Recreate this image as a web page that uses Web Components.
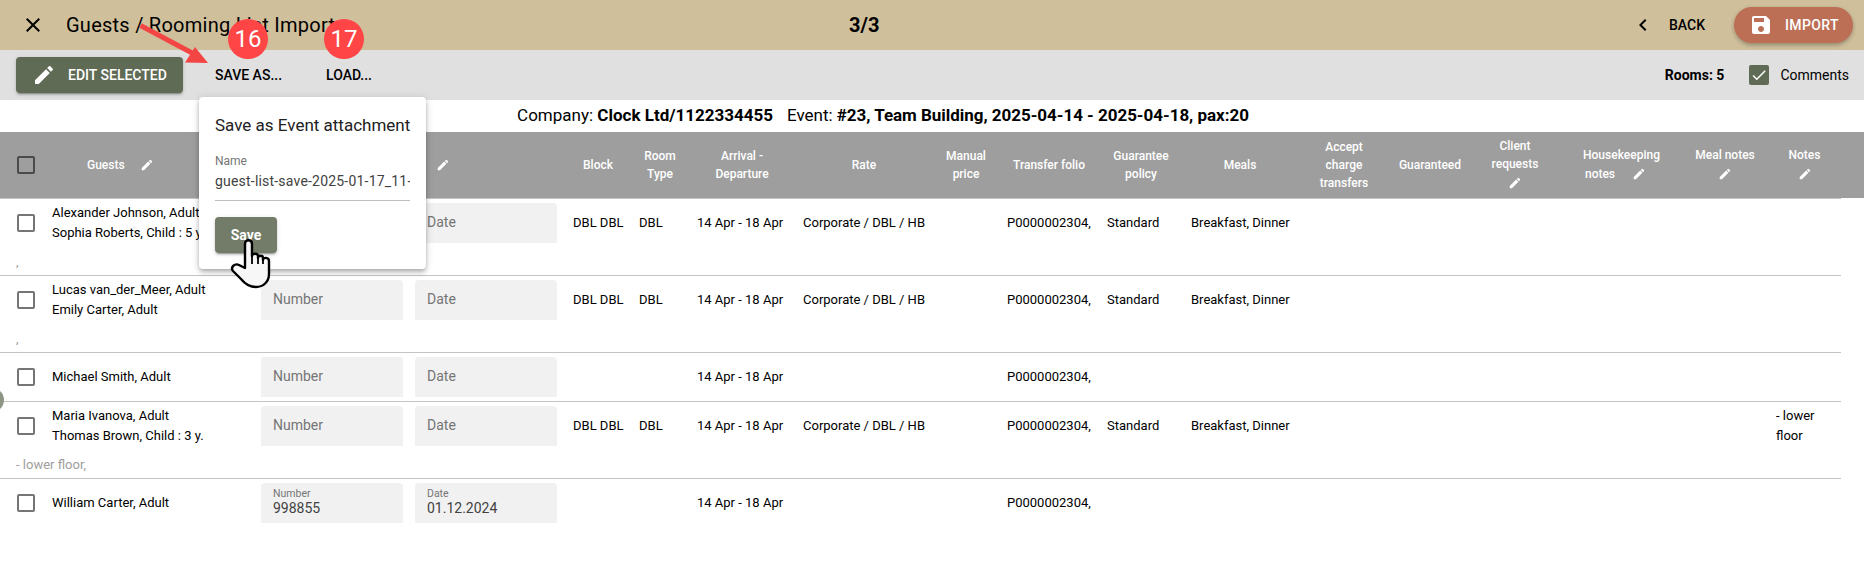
<!DOCTYPE html>
<html lang="en">
<head>
<meta charset="utf-8">
<title>Guests / Rooming List Import</title>
<style>
html,body{margin:0;padding:0;background:#fff;overflow:hidden}
body{font-family:Roboto,"Liberation Sans",sans-serif;color:#000}
</style>
</head>
<body>
<gl-app></gl-app>
<script>
const P={
 close:'M19 6.41L17.59 5 12 10.59 6.41 5 5 6.41 10.59 12 5 17.59 6.41 19 12 13.41 17.59 19 19 17.59 13.41 12z',
 edit:'M3 17.25V21h3.75L17.81 9.94l-3.75-3.75L3 17.25zM20.71 7.04a1 1 0 0 0 0-1.41l-2.34-2.34a1 1 0 0 0-1.41 0l-1.83 1.83 3.75 3.75 1.83-1.83z',
 save:'M17 3H5c-1.11 0-2 .9-2 2v14c0 1.1.89 2 2 2h14c1.1 0 2-.9 2-2V7l-4-4zm-5 16c-1.66 0-3-1.34-3-3s1.34-3 3-3 3 1.34 3 3-1.34 3-3 3zm3-10H5V5h10v4z',
 back:'M15.41 7.41L14 6l-6 6 6 6 1.41-1.41L10.83 12z',
 check:'M9 16.17L4.83 12l-1.42 1.41L9 19 21 7l-1.41-1.41z'
};
const icon=(n,s,c='currentColor')=>`<svg width="${s}" height="${s}" viewBox="0 0 24 24" fill="${c}" style="display:block;flex:none" aria-hidden="true"><path d="${P[n]}"/></svg>`;
const COLS='44px 209px 156px 156px 66px 58px 106px 138px 66px 100px 84px 114px 94px 78px 92px 121px 86px 73px';

class Base extends HTMLElement{
  render(html){ if(!this.shadowRoot) this.attachShadow({mode:'open'}); this.shadowRoot.innerHTML=html; }
}
class GlBadge extends Base{connectedCallback(){this.render(`<style>
:host{position:absolute;display:flex;width:40px;height:40px;align-items:center;justify-content:center;border-radius:50%;background:#ff4545;color:#fff;font:400 24px/1 Roboto,sans-serif}
</style><slot></slot>`)}}
class GlCheck extends Base{connectedCallback(){const on=this.hasAttribute('checked');this.render(`<style>
:host{display:block;flex:none;box-sizing:border-box;width:18px;height:18px;border:2px solid var(--check-border,#757575);border-radius:2px}
:host([checked]){width:20px;height:20px;border:0;background:#606b55;display:flex;align-items:center;justify-content:center;border-radius:2px}
</style>${on?icon('check',18,'#fff'):''}`)}}
class GlTopbar extends Base{connectedCallback(){this.render(`<style>
:host{display:grid;grid-template-columns:828px 1fr auto;align-items:center;height:50px;background:#cfbf9b;padding:0 11px 0 21px;box-sizing:border-box}
.l{display:flex;align-items:center;gap:21px;color:#000}
h1{margin:0;font:400 20px/1 Roboto,sans-serif;letter-spacing:.25px;white-space:nowrap}
.step{font:700 20px/1 Roboto,sans-serif}
.r{display:flex;align-items:center}
.back{display:flex;align-items:center;font:500 14px/1 Roboto,sans-serif;margin-right:29px;gap:14px}
.imp{display:flex;align-items:center;height:36px;width:119px;box-sizing:border-box;padding-left:15px;gap:12px;background:#bd6f56;color:#fff;border-radius:18px;font:500 14px/1 Roboto,sans-serif;letter-spacing:.35px;box-shadow:0 3px 5px -1px rgba(0,0,0,.2),0 1px 4px rgba(0,0,0,.14)}
</style>
<div class="l">${icon('close',24,'#000')}<h1>Guests / Rooming List Import</h1></div>
<div class="step">3/3</div>
<div class="r"><div class="back">${icon('back',24,'#000')}<span>BACK</span></div>
<div class="imp">${icon('save',24,'#fff')}<span>IMPORT</span></div></div>`)}}
class GlToolbar extends Base{connectedCallback(){this.render(`<style>
:host{display:flex;align-items:center;height:50px;background:#e0e0e0;padding:0 15px 0 16px;box-sizing:border-box}
.b{display:flex;align-items:center;font:500 14px/1 Roboto,sans-serif;white-space:nowrap}
.edit{background:#606b55;color:#fff;height:36px;width:167px;box-sizing:border-box;padding-left:16px;gap:12px;border-radius:4px;box-shadow:0 3px 1px -2px rgba(0,0,0,.2),0 2px 2px rgba(0,0,0,.14),0 1px 5px rgba(0,0,0,.12)}
.save{margin-left:32px}
.load{margin-left:44px}
.rooms{margin-left:auto;font:700 14px/1 Roboto,sans-serif;margin-right:25px}
.c{font:400 14px/1 Roboto,sans-serif;margin-left:11px}
</style>
<div class="b edit">${icon('edit',24,'#fff')}<span>EDIT SELECTED</span></div>
<div class="b save">SAVE AS...</div>
<div class="b load">LOAD...</div>
<div class="rooms">Rooms: 5</div>
<gl-check checked></gl-check>
<div class="c">Comments</div>`)}}
class GlInfo extends Base{connectedCallback(){this.render(`<style>
:host{display:flex;justify-content:center;align-items:center;gap:14px;height:32px;font:400 17px/1 Roboto,sans-serif;padding:0 98px 2px 0;box-sizing:border-box}
b{font-weight:700}
.e{letter-spacing:-.03px}
</style>
<span>Company: <b>Clock Ltd/1122334455</b></span><span class="e">Event: <b>#23, Team Building, 2025-04-14 - 2025-04-18, pax:20</b></span>`)}}
class GlHead extends Base{connectedCallback(){
 const pen=icon('edit',14,'#fff');
 const cols=[
  ['<gl-check></gl-check>','chk'],['<span>Guests</span><i class="g">'+pen+'</i>','gu'],['','' ],['<i class="d">'+pen+'</i>','du'],
  ['Block'],['Room<br>Type'],['Arrival -<br>Departure'],['Rate'],['Manual<br>price'],['Transfer folio'],['Guarantee<br>policy'],['Meals'],
  ['Accept<br>charge<br>transfers'],['Guaranteed'],['Client<br>requests<i>'+pen+'</i>'],
  ['Housekeeping<br><span class="hk">notes<i>'+pen+'</i></span>'],['Meal notes<i>'+pen+'</i>'],['Notes<i>'+pen+'</i>']];
 this.render(`<style>
:host{display:grid;grid-template-columns:${COLS};height:66px;box-sizing:border-box;background:#9e9e9e;align-items:center;color:#fff;font:500 12px/18px Roboto,sans-serif;text-align:center;--check-border:#4a4a4a}
.c i{display:flex;justify-content:center;font-style:normal;height:20px;align-items:center}
.chk{padding-left:17px}
.gu{display:flex;align-items:center;padding-left:43px}
.gu i.g{margin-left:15px}
.du i.d{justify-content:flex-start;padding-left:27px}
.hk{display:inline-flex;align-items:center;gap:17px;margin-left:-12px;line-height:20px}
.hk i{height:20px}
</style>${cols.map(c=>`<div class="c ${c[1]||''}">${c[0]}</div>`).join('')}`)}}
class GlField extends Base{connectedCallback(){const v=this.getAttribute('value'),l=this.getAttribute('label');this.render(`<style>
:host{display:block;box-sizing:border-box;height:40px;background:#f1f1f1;border-radius:4px 4px 0 0;padding:0 12px;overflow:hidden;font-family:Roboto,sans-serif}
.ph{font:400 14px/38px Roboto,sans-serif;color:#757575}
.l{font:400 10.5px/12px Roboto,sans-serif;color:#757575;padding-top:5px}
.v{font:400 14px/18px Roboto,sans-serif;color:#424242;margin-top:-1px}
</style>${v?`<div class="l">${l}</div><div class="v">${v}</div>`:`<div class="ph">${l}</div>`}`)}}
class GlRow extends Base{connectedCallback(){
 const d=this.data;
 const cell=t=>`<div class="t">${t||''}</div>`;
 this.render(`<style>
:host{display:block;box-sizing:border-box;width:1841px;padding-top:4px;border-bottom:1px solid #c4c4c4;font:400 13px/20px Roboto,sans-serif;color:#000}
:host([last]){border-bottom:0}
.g{display:grid;grid-template-columns:${COLS};align-items:center;height:40px}
.ck{padding-left:17px}
.n{padding-left:8px;white-space:nowrap;overflow:visible}
.f1{padding:0 6px 0 8px}.f2{padding:0 8px 0 6px}
.t{padding-left:8px;white-space:nowrap}
.w{white-space:normal;padding-right:0}
.note{margin:0;padding-left:16px;height:32px;box-sizing:border-box;padding-top:9px;color:#9e9e9e}
.pad{height:4px}
</style>
<div class="g">
<div class="ck"><gl-check></gl-check></div>
<div class="n">${d.names.join('<br>')}</div>
<div class="f1"><gl-field label="Number" ${d.num?`value="${d.num}"`:''}></gl-field></div>
<div class="f2"><gl-field label="Date" ${d.date?`value="${d.date}"`:''}></gl-field></div>
${d.full?cell('DBL DBL')+cell('DBL'):cell()+cell()}
${cell('14 Apr - 18 Apr')}
${d.full?cell('Corporate / DBL / HB'):cell()}
${cell()}
${cell('P0000002304,')}
${d.full?cell('Standard')+cell('Breakfast, Dinner'):cell()+cell()}
${cell()}${cell()}${cell()}${cell()}${cell()}
<div class="t w">${d.notes||''}</div>
</div>
${d.comment!==undefined?`<div class="note">${d.comment}</div>`:'<div class="pad"></div>'}`)}}
class GlTable extends Base{connectedCallback(){
 this.render(`<style>:host{display:block}.rule{width:1841px;height:1px;background:#c4c4c4}</style><gl-head></gl-head><div class="rule"></div><div id="b"></div>`);
 const rows=[
  {names:['Alexander Johnson, Adult','Sophia Roberts, Child : 5 y.'],full:1,comment:','},
  {names:['Lucas van_der_Meer, Adult','Emily Carter, Adult'],full:1,comment:','},
  {names:['Michael Smith, Adult']},
  {names:['Maria Ivanova, Adult','Thomas Brown, Child : 3 y.'],full:1,notes:'- lower floor',comment:'- lower floor,'},
  {names:['William Carter, Adult'],num:'998855',date:'01.12.2024',last:1}];
 const b=this.shadowRoot.getElementById('b');
 rows.forEach(r=>{const e=document.createElement('gl-row');e.data=r;if(r.last)e.setAttribute('last','');b.appendChild(e)});
}}
class GlPopover extends Base{connectedCallback(){this.render(`<style>
:host{position:absolute;display:block;box-sizing:border-box;background:#fff;border-radius:4px;padding:18px 16px 0;box-shadow:0 2px 4px -1px rgba(0,0,0,.2),0 4px 5px rgba(0,0,0,.14),0 1px 10px rgba(0,0,0,.12);font-family:Roboto,sans-serif}
.h{font:400 17px/20px Roboto,sans-serif;white-space:nowrap;color:#212121}
.lb{margin-top:19px;font:400 12px/14px Roboto,sans-serif;color:#757575}
.v{margin-top:3px;height:29px;border-bottom:1px solid #bdbdbd;overflow:hidden;white-space:nowrap;font:400 14px/20px Roboto,sans-serif;color:#424242;letter-spacing:.2px}
.s{margin-top:16px;width:62px;height:36px;display:flex;align-items:center;justify-content:center;background:#737c68;color:#fff;border-radius:4px;font:700 14px/1 Roboto,sans-serif;box-shadow:0 3px 1px -2px rgba(0,0,0,.2),0 2px 2px rgba(0,0,0,.14),0 1px 5px rgba(0,0,0,.12)}
</style>
<div class="h">Save as Event attachment</div>
<div class="lb">Name</div>
<div class="v">guest-list-save-2025-01-17_11-</div>
<div class="s">Save</div>`)}}
class GlApp extends Base{connectedCallback(){this.render(`<style>
:host{display:block;position:relative;width:1864px;height:567px;overflow:hidden;font-family:Roboto,sans-serif}
gl-popover{left:199px;top:97px;width:227px;height:172px}
.b16{left:228px;top:19px}.b17{left:324px;top:19px}
.arrow{position:absolute;left:130px;top:20px}
.hand{position:absolute;left:230px;top:238px}
.dot{position:absolute;left:-20px;top:388px;width:24px;height:24px;border-radius:50%;background:#8f9585}
</style>
<gl-topbar></gl-topbar>
<gl-toolbar></gl-toolbar>
<gl-info></gl-info>
<gl-table></gl-table>
<div class="dot"></div>
<gl-popover></gl-popover>
<svg class="arrow" width="90" height="50" viewBox="0 0 90 50" aria-hidden="true"><path d="M10.5 5.5 L64 34" stroke="#f44545" stroke-width="5" fill="none"/><path d="M78 43 L55 42.5 L65 27 Z" fill="#f44545"/></svg>
<gl-badge class="b16">16</gl-badge>
<gl-badge class="b17">17</gl-badge>
<svg class="hand" width="42" height="52" viewBox="0 0 42 52" aria-hidden="true"><path d="M15 30 L15 6 C15 1 22 1 22 6 L22 18 C22 15 28 15 28 18 L28 20 C28 17 33 17 33 20 L33 22 C33 19 39 19 39 23 L39 36 C39 44 33 49 26 49 C19 49 15 46 11 41 L3 33 C0 29 5 25 9 27 Z" fill="#f7f7f7" stroke="#000" stroke-width="2.4" stroke-linejoin="round"/><path d="M22 18 V26 M28 20 V26 M33 22 V26" stroke="#000" stroke-width="1.8" fill="none"/></svg>
`)}}
customElements.define('gl-badge',GlBadge);
customElements.define('gl-check',GlCheck);
customElements.define('gl-field',GlField);
customElements.define('gl-topbar',GlTopbar);
customElements.define('gl-toolbar',GlToolbar);
customElements.define('gl-info',GlInfo);
customElements.define('gl-head',GlHead);
customElements.define('gl-row',GlRow);
customElements.define('gl-table',GlTable);
customElements.define('gl-popover',GlPopover);
customElements.define('gl-app',GlApp);
</script>
</body>
</html>
